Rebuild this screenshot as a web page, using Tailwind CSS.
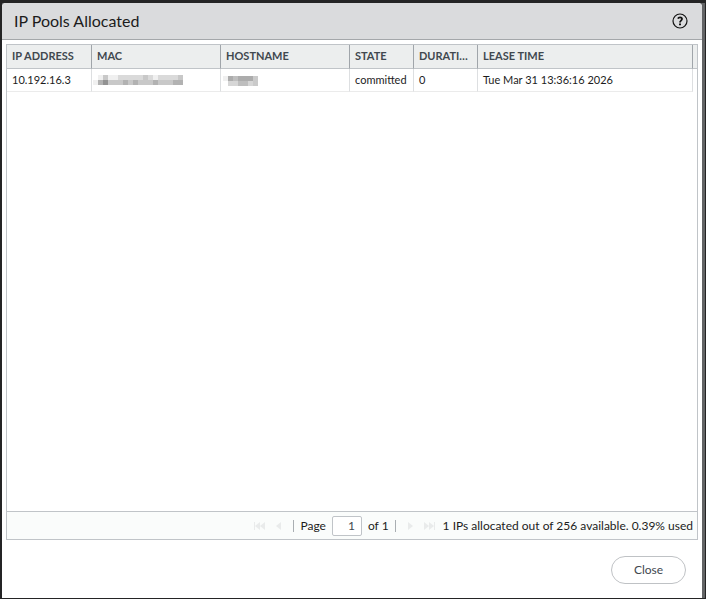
<!DOCTYPE html>
<html lang="en">
<head>
  <meta charset="UTF-8" />
  <meta name="viewport" content="width=device-width, initial-scale=1.0" />
  <title>IP Pools Allocated</title>
  <script src="https://cdn.jsdelivr.net/npm/@tailwindcss/browser@4"></script>
</head>
<body class="h-screen bg-[#242425] pt-[3px] pr-px pb-px pl-[2px] font-['Lato',sans-serif] text-xs text-[#1c1c1c]">
  <div class="h-full bg-[#636466] pr-[3px]">
    <div class="flex h-full flex-col rounded-t bg-white" role="dialog" aria-labelledby="title">
      <header class="flex h-[37px] shrink-0 items-center justify-between rounded-t border-b border-[#a4a7aa] bg-[#dadbdd] pr-[14px] pl-3">
        <h1 id="title" class="text-base leading-5">IP Pools Allocated</h1>
        <button type="button" aria-label="Help">
          <svg class="size-4" viewBox="0 0 16 16" fill="none" stroke="#111">
            <circle cx="8" cy="8" r="7" stroke-width="1.2" />
            <path d="M5.900 5.600C6.300 4.800 7 4.400 8 4.400c1.200 0 2 .7 2 1.700 0 1.500-2 1.500-2 3.300" stroke-width="1.800" />
            <path d="M8 10.400v1.900" stroke-width="2" />
          </svg>
        </button>
      </header>

      <main class="mx-1 mt-1 flex flex-1 flex-col border border-[#c0c4c8]">
        <div class="flex-1">
          <table class="w-full table-fixed border-separate border-spacing-0 text-left">
            <colgroup>
              <col class="w-[85px]" />
              <col class="w-[129px]" />
              <col class="w-[129px]" />
              <col class="w-16" />
              <col class="w-16" />
              <col />
              <col class="w-1" />
            </colgroup>
            <thead class="bg-[#eceeee] text-[11px] text-[#41484f]">
              <tr class="h-6">
                <th class="truncate border-r border-b border-r-[#a0a5aa] border-b-[#c0c4c8] px-[5px] pb-px">IP ADDRESS</th>
                <th class="truncate border-r border-b border-r-[#a0a5aa] border-b-[#c0c4c8] px-[5px] pb-px">MAC</th>
                <th class="truncate border-r border-b border-r-[#a0a5aa] border-b-[#c0c4c8] px-[5px] pb-px">HOSTNAME</th>
                <th class="truncate border-r border-b border-r-[#a0a5aa] border-b-[#c0c4c8] px-[5px] pb-px">STATE</th>
                <th class="truncate border-r border-b border-r-[#a0a5aa] border-b-[#c0c4c8] px-[5px] pb-px">DURATION</th>
                <th class="truncate border-r border-b border-r-[#a0a5aa] border-b-[#c0c4c8] px-[5px] pb-px">LEASE TIME</th>
                <td class="border-b border-[#c0c4c8]"></td>
              </tr>
            </thead>
            <tbody class="text-[11px]">
              <tr class="h-[23px]">
                <td class="border-r border-b border-[#dddfe1] border-b-[#ebebeb] px-[5px]">10.192.16.3</td>
                <td class="border-r border-b border-[#dddfe1] border-b-[#ebebeb] px-px pb-px">
                  <svg class="h-[10px] w-[90px]" viewBox="0 0 18 2" preserveAspectRatio="none" shape-rendering="crispEdges" aria-label="Redacted">
                    <path fill="#f0f0f0" d="M1 0h1v1h-1zM3 0h2v1h-2zM12 0h1v1h-1zM0 1h1v1h-1z" />
                    <path fill="#dadada" d="M5 0h5v1h-5zM11 0h1v1h-1zM13 0h4v1h-4z" />
                    <path fill="#c8c8c8" d="M2 0h1v1h-1zM10 0h1v1h-1zM17 0h1v1h-1zM3 1h3v1h-3zM7 1h1v1h-1zM9 1h3v1h-3zM13 1h3v1h-3z" />
                    <path fill="#b2b2b2" d="M1 1h1v1h-1zM6 1h1v1h-1zM8 1h1v1h-1zM12 1h1v1h-1zM16 1h2v1h-2z" />
                    <path fill="#929292" d="M2 1h1v1h-1z" />
                  </svg>
                </td>
                <td class="border-r border-b border-[#dddfe1] border-b-[#ebebeb] px-[2px] pt-px">
                  <svg class="h-[10px] w-[35px]" viewBox="0 0 7 2" preserveAspectRatio="none" shape-rendering="crispEdges" aria-label="Redacted">
                    <path fill="#f0f0f0" d="M0 0h1v1h-1z" />
                    <path fill="#d6d6d6" d="M1 1h2v1h-2zM5 1h1v1h-1z" />
                    <path fill="#cacaca" d="M6 0h1v2h-1z" />
                    <path fill="#bebebe" d="M2 0h1v1h-1zM3 1h2v1h-2z" />
                    <path fill="#acacac" d="M1 0h1v1h-1zM3 0h3v1h-3z" />
                  </svg>
                </td>
                <td class="border-r border-b border-[#dddfe1] border-b-[#ebebeb] px-[5px]">committed</td>
                <td class="border-r border-b border-[#dddfe1] border-b-[#ebebeb] px-[5px]">0</td>
                <td class="border-r border-b border-[#dddfe1] border-b-[#ebebeb] px-[5px]">Tue Mar 31 13:36:16 2026</td>
                <td></td>
              </tr>
            </tbody>
          </table>
        </div>

        <div class="flex h-7 items-center justify-end border-t border-[#c0c4c8] bg-[#fafcfb] pr-1">
          <button type="button" aria-label="First page" disabled>
            <svg class="h-2 w-3" viewBox="0 0 12 8" fill="#e9ebeb"><path d="M0 0h1v8h-1zM6 0v8L1 4zM11 0v8L6 4z" /></svg>
          </button>
          <button type="button" aria-label="Previous page" class="ml-[10px]" disabled>
            <svg class="h-2 w-[5px]" viewBox="0 0 5 8" fill="#e9ebeb"><path d="M5 0v8L0 4z" /></svg>
          </button>
          <span class="ml-3 h-3 w-px bg-[#a9aeb2]"></span>
          <label for="page" class="ml-[6px]">Page</label>
          <input id="page" type="text" value="1" class="ml-[6px] h-5 w-[30px] rounded-xs border border-[#c0c4c8] bg-white pr-[6px] text-right text-[#41484f]" />
          <span class="ml-[6px]">of 1</span>
          <span class="ml-[6px] h-3 w-px bg-[#a9aeb2]"></span>
          <button type="button" aria-label="Next page" class="ml-3" disabled>
            <svg class="h-2 w-[5px]" viewBox="0 0 5 8" fill="#e9ebeb"><path d="M0 0v8L5 4z" /></svg>
          </button>
          <button type="button" aria-label="Last page" class="ml-[10px]" disabled>
            <svg class="h-2 w-3" viewBox="0 0 12 8" fill="#e9ebeb"><path d="M11 0h1v8h-1zM1 0v8L6 4zM6 0v8L11 4z" /></svg>
          </button>
          <span class="ml-2">1 IPs allocated out of 256 available. 0.39% used</span>
        </div>
      </main>

      <footer class="flex shrink-0 justify-end px-4 pt-4 pb-[14px]">
        <button type="button" class="h-7 w-[75px] rounded-full border border-[#bfc2c5] text-[#41484f]">Close</button>
      </footer>
    </div>
  </div>
</body>
</html>
